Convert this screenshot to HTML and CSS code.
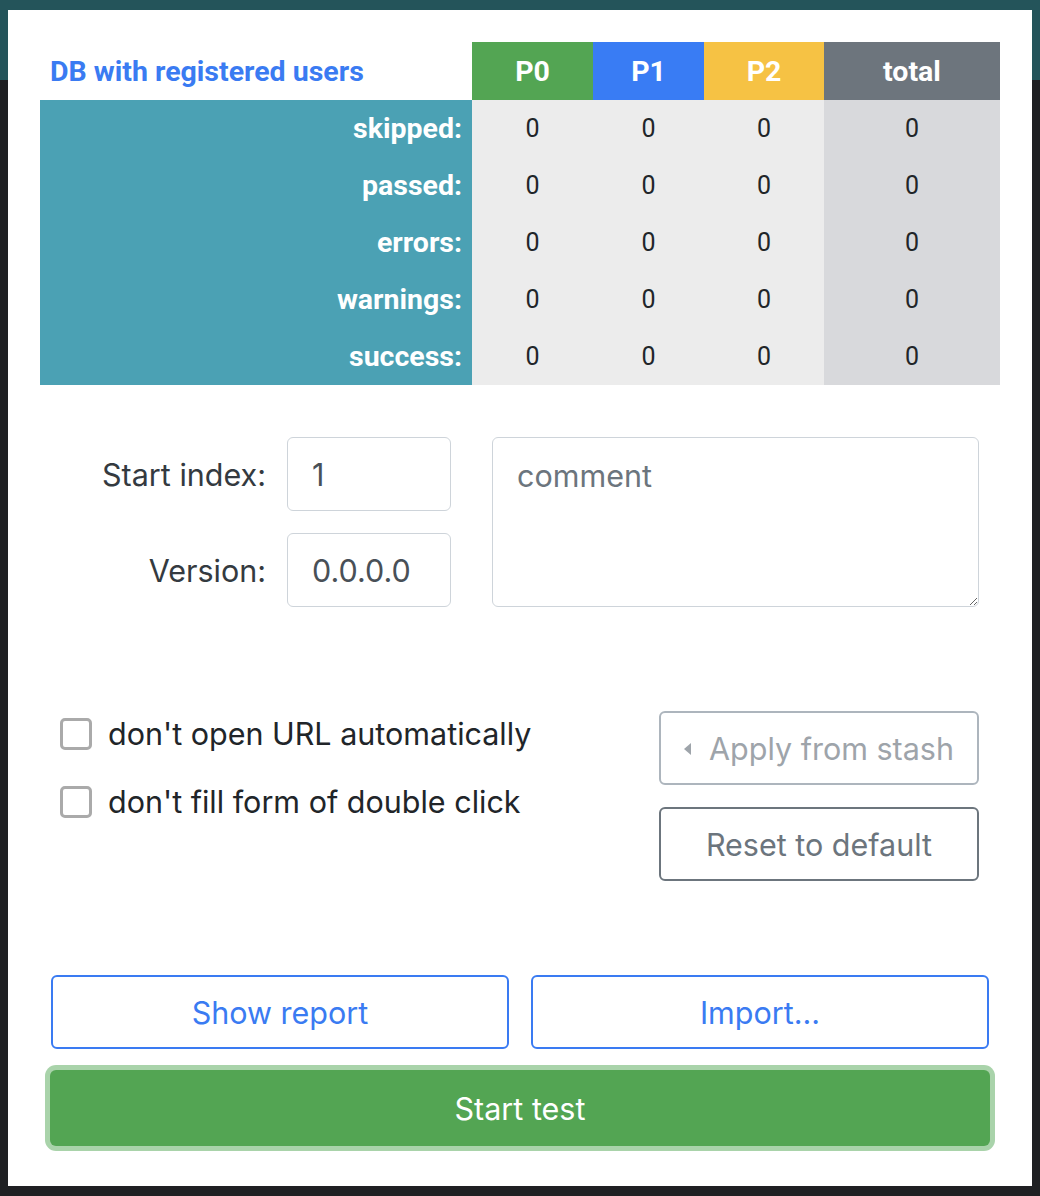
FILE: index.html
```html
<!DOCTYPE html>
<html lang="en">
<head>
    <meta charset="UTF-8">
    <title>Test runner</title>
    <link rel="stylesheet" href="styles.css">
</head>
<body>
    <div class="popup">
        <table class="stats">
            <thead>
                <tr>
                    <th class="caption">DB with registered users</th>
                    <th class="p0">P0</th>
                    <th class="p1">P1</th>
                    <th class="p2">P2</th>
                    <th class="total">total</th>
                </tr>
            </thead>
            <tbody>
                <tr><th>skipped:</th><td>0</td><td>0</td><td>0</td><td class="sum">0</td></tr>
                <tr><th>passed:</th><td>0</td><td>0</td><td>0</td><td class="sum">0</td></tr>
                <tr><th>errors:</th><td>0</td><td>0</td><td>0</td><td class="sum">0</td></tr>
                <tr><th>warnings:</th><td>0</td><td>0</td><td>0</td><td class="sum">0</td></tr>
                <tr><th>success:</th><td>0</td><td>0</td><td>0</td><td class="sum">0</td></tr>
            </tbody>
        </table>

        <div class="params">
            <label class="field-label" for="start-index">Start index:</label>
            <input class="field" type="text" id="start-index" value="1">
            <textarea class="comment" placeholder="comment"></textarea>
            <label class="field-label" for="version">Version:</label>
            <input class="field" type="text" id="version" value="0.0.0.0">
        </div>

        <div class="options">
            <div class="checks">
                <label class="check"><input type="checkbox"><span>don't open URL automatically</span></label>
                <label class="check"><input type="checkbox"><span>don't fill form of double click</span></label>
            </div>
            <div class="stash">
                <button class="btn btn-light" disabled><span class="caret"></span>Apply from stash</button>
                <button class="btn btn-grey">Reset to default</button>
            </div>
        </div>

        <div class="actions">
            <button class="btn btn-blue">Show report</button>
            <button class="btn btn-blue">Import...</button>
        </div>
        <button class="btn start">Start test</button>
    </div>
</body>
</html>
```

FILE: styles.css
```css
body {
    margin: 0;
    min-height: 1196px;
    background: linear-gradient(#24545a 0, #24545a 80px, #1f2023 80px);
    font-family: Inter, 'Noto Sans', sans-serif;
}
.popup {
    margin: 10px 8px 0 8px;
    background: #fff;
    padding: 32px 32px 35px 32px;
    height: 1176px;
    box-sizing: border-box;
}

/* stats table */
.stats {
    width: 960px;
    border-collapse: collapse;
    font-family: Roboto, Arial, sans-serif;
    font-size: 25px;
}
.stats thead th {
    height: 58px;
    padding: 0;
    color: #fff;
    font-size: 28.5px;
    font-weight: bold;
    text-align: center;
}
.stats th.caption {
    width: 422px;
    text-align: left;
    padding-left: 10px;
    color: #3a7bf2;
    background: #fff;
}
.stats .p0 { background: #53a553; width: 121px; }
.stats .p1 { background: #397cf4; width: 111px; }
.stats .p2 { background: #f6c244; width: 120px; }
.stats .total { background: #6d757d; }
.stats tbody th {
    height: 57px;
    padding: 0 10px 0 0;
    background: #4ba1b4;
    color: #fff;
    font-size: 28.5px;
    font-weight: bold;
    text-align: right;
}
.stats td {
    padding: 0;
    text-align: center;
    background: #ececec;
    color: #212529;
}
.stats td.sum { background: #d8d9dc; }

/* params */
.params {
    display: grid;
    grid-template-columns: 226px 164px 507px;
    grid-template-rows: 74px 74px;
    column-gap: 21px;
    row-gap: 22px;
    margin-top: 52px;
}
.field-label {
    align-self: center;
    text-align: right;
    font-size: 30.5px;
    color: #343a40;
}
.field {
    box-sizing: border-box;
    width: 164px;
    height: 74px;
    border: 1.5px solid #ced4da;
    border-radius: 6px;
    padding: 0 24px;
    font-family: inherit;
    font-size: 30.5px;
    color: #495057;
}
.comment {
    grid-column: 3;
    grid-row: 1 / span 2;
    margin-left: 20px;
    box-sizing: border-box;
    border: 1.5px solid #ced4da;
    border-radius: 6px;
    padding: 19px 24px;
    font-family: inherit;
    font-size: 30.5px;
    color: #495057;
}
.comment::placeholder { color: #6c757d; }

/* options */
.options {
    display: flex;
    justify-content: space-between;
    margin: 104px 21px 0 20px;
}
.checks {
    display: flex;
    flex-direction: column;
    gap: 31px;
    padding-top: 4px;
}
.check {
    display: flex;
    align-items: center;
    gap: 16px;
    font-size: 30.5px;
    color: #212529;
}
.check input {
    appearance: none;
    margin: 0;
    width: 32px;
    height: 32px;
    border: 3px solid #aaa;
    border-radius: 5px;
    box-sizing: border-box;
    background: #fff;
}
.stash {
    display: flex;
    flex-direction: column;
    gap: 22px;
}
.btn {
    box-sizing: border-box;
    height: 74px;
    border-radius: 6px;
    background: #fff;
    font-family: inherit;
    font-size: 30.5px;
    cursor: pointer;
}
.stash .btn { width: 320px; }
.btn-light {
    border: 2px solid #adb5bd;
    color: #9ea4aa;
}
.caret {
    display: inline-block;
    border-top: 6px solid transparent;
    border-bottom: 6px solid transparent;
    border-right: 7px solid #9ea4aa;
    margin-right: 18px;
    vertical-align: middle;
    position: relative;
    top: -2px;
}
.btn-grey {
    border: 2px solid #6c757d;
    color: #6c757d;
}

/* actions */
.actions {
    display: flex;
    gap: 22px;
    margin: 94px 11px 0 11px;
}
.btn-blue {
    flex: 1;
    border: 2px solid #3a7bf2;
    color: #3a7bf2;
}
.start {
    display: block;
    width: 940px;
    height: 76px;
    margin: 21px 0 0 10px;
    background: #53a553;
    border: none;
    color: #fff;
    box-shadow: 0 0 0 5px #a9d3aa;
}
```
